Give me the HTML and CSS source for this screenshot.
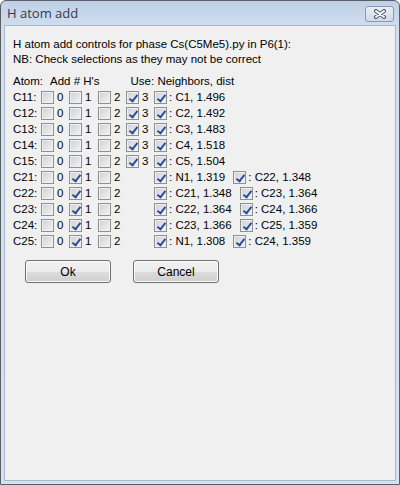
FILE: index.html
```html
<!DOCTYPE html>
<html lang="en">
<head>
    <meta charset="UTF-8">
    <title>H atom add</title>
    <link rel="stylesheet" href="styles.css">
</head>
<body>

<div class="window">
    <div class="titlebar">
        <span class="title">H atom add</span>
        <span class="close">
            <svg width="14" height="10" viewBox="0 0 14 10">
                <path d="M3 2 L11 8 M11 2 L3 8" stroke="#4a5566" stroke-width="4" stroke-linecap="round"/>
                <path d="M3 2 L11 8 M11 2 L3 8" stroke="#ffffff" stroke-width="2" stroke-linecap="round"/>
            </svg>
        </span>
    </div>

    <div class="content">
        <p class="note">H atom add controls for phase Cs(C5Me5).py in P6(1):</p>
        <p class="note">NB: Check selections as they may not be correct</p>

        <div class="table">
            <div class="row head">
                <span>Atom:</span>
                <span class="addh">Add # H's</span>
                <span class="use">Use: Neighbors, dist</span>
            </div>

            <!-- C5 ring atoms -->
            <div class="row">
                <span>C11:</span>
                <label><i class="cb"></i>0</label>
                <label><i class="cb"></i>1</label>
                <label><i class="cb"></i>2</label>
                <label><i class="cb on"></i>3</label>
                <div class="nbrs"><label><i class="cb on"></i>: C1, 1.496</label></div>
            </div>
            <div class="row">
                <span>C12:</span>
                <label><i class="cb"></i>0</label>
                <label><i class="cb"></i>1</label>
                <label><i class="cb"></i>2</label>
                <label><i class="cb on"></i>3</label>
                <div class="nbrs"><label><i class="cb on"></i>: C2, 1.492</label></div>
            </div>
            <div class="row">
                <span>C13:</span>
                <label><i class="cb"></i>0</label>
                <label><i class="cb"></i>1</label>
                <label><i class="cb"></i>2</label>
                <label><i class="cb on"></i>3</label>
                <div class="nbrs"><label><i class="cb on"></i>: C3, 1.483</label></div>
            </div>
            <div class="row">
                <span>C14:</span>
                <label><i class="cb"></i>0</label>
                <label><i class="cb"></i>1</label>
                <label><i class="cb"></i>2</label>
                <label><i class="cb on"></i>3</label>
                <div class="nbrs"><label><i class="cb on"></i>: C4, 1.518</label></div>
            </div>
            <div class="row">
                <span>C15:</span>
                <label><i class="cb"></i>0</label>
                <label><i class="cb"></i>1</label>
                <label><i class="cb"></i>2</label>
                <label><i class="cb on"></i>3</label>
                <div class="nbrs"><label><i class="cb on"></i>: C5, 1.504</label></div>
            </div>

            <!-- Cp ring atoms -->
            <div class="row">
                <span>C21:</span>
                <label><i class="cb"></i>0</label>
                <label><i class="cb on"></i>1</label>
                <label><i class="cb"></i>2</label>
                <span></span>
                <div class="nbrs">
                    <label><i class="cb on"></i>: N1, 1.319</label>
                    <label><i class="cb on"></i>: C22, 1.348</label>
                </div>
            </div>
            <div class="row">
                <span>C22:</span>
                <label><i class="cb"></i>0</label>
                <label><i class="cb on"></i>1</label>
                <label><i class="cb"></i>2</label>
                <span></span>
                <div class="nbrs">
                    <label><i class="cb on"></i>: C21, 1.348</label>
                    <label><i class="cb on"></i>: C23, 1.364</label>
                </div>
            </div>
            <div class="row">
                <span>C23:</span>
                <label><i class="cb"></i>0</label>
                <label><i class="cb on"></i>1</label>
                <label><i class="cb"></i>2</label>
                <span></span>
                <div class="nbrs">
                    <label><i class="cb on"></i>: C22, 1.364</label>
                    <label><i class="cb on"></i>: C24, 1.366</label>
                </div>
            </div>
            <div class="row">
                <span>C24:</span>
                <label><i class="cb"></i>0</label>
                <label><i class="cb on"></i>1</label>
                <label><i class="cb"></i>2</label>
                <span></span>
                <div class="nbrs">
                    <label><i class="cb on"></i>: C23, 1.366</label>
                    <label><i class="cb on"></i>: C25, 1.359</label>
                </div>
            </div>
            <div class="row">
                <span>C25:</span>
                <label><i class="cb"></i>0</label>
                <label><i class="cb on"></i>1</label>
                <label><i class="cb"></i>2</label>
                <span></span>
                <div class="nbrs">
                    <label><i class="cb on"></i>: N1, 1.308</label>
                    <label><i class="cb on"></i>: C24, 1.359</label>
                </div>
            </div>
        </div>

        <div class="actions">
            <button>Ok</button>
            <button>Cancel</button>
        </div>
    </div>
</div>

</body>
</html>
```

FILE: styles.css
```css
body {
    margin: 0;
    font-family: "Liberation Sans", Arial, sans-serif;
    font-size: 11.5px;
    color: #000;
    background: #fff;
}
.window {
    width: 400px;
    height: 485px;
    box-sizing: border-box;
    border: 1px solid #5a5f66;
    border-radius: 6px 6px 0 0;
    background: linear-gradient(#bfd0e6, #d3e0ef 30px, #d6e2f0);
    display: flex;
    flex-direction: column;
}
.titlebar {
    height: 24px;
    display: flex;
    align-items: center;
    justify-content: space-between;
    padding: 0 5px 0 6px;
}
.title {
    font-family: "Open Sans", "Liberation Sans", sans-serif;
    font-size: 13px;
    color: #333a4e;
}
.close {
    width: 29px;
    height: 16px;
    box-sizing: border-box;
    border: 1px solid #8b99ad;
    border-radius: 3px;
    background: linear-gradient(#e9eff6, #cfd9e6);
    display: flex;
    align-items: center;
    justify-content: center;
    margin-top: 2px;
}
.content {
    flex: 1;
    margin: 0 3px 3px;
    border: 1px solid #a9b8ca;
    background: #f0f0f0;
    padding: 11px 8px 0;
}
.note {
    margin: 0;
    line-height: 15px;
}
.table {
    margin-top: 6px;
}
.row {
    display: grid;
    grid-template-columns: 28px 28px 29px 28px 28px 1fr;
    height: 16px;
    align-items: center;
}
.row.head {
    display: flex;
}
.row.head .addh {
    margin-left: 7px;
}
.row.head .use {
    margin-left: 31px;
}
label {
    display: flex;
    align-items: center;
    white-space: nowrap;
}
.nbrs {
    display: flex;
    gap: 8px;
}
.cb {
    position: relative;
    width: 13px;
    height: 13px;
    box-sizing: border-box;
    border: 1px solid #8e8f8f;
    background: linear-gradient(135deg, #cdd0d4, #f3f3f3);
    box-shadow: inset 0 0 0 1px #eef0f2;
    margin-right: 3px;
}
.nbrs .cb {
    margin-right: 2px;
}
.cb.on::after {
    content: "";
    position: absolute;
    left: 4px;
    top: 1px;
    width: 3px;
    height: 7px;
    border: solid #2d4c9c;
    border-width: 0 2px 2px 0;
    transform: rotate(38deg);
}
.actions {
    display: flex;
    gap: 22px;
    margin: 11px 0 0 12px;
}
button {
    width: 86px;
    height: 23px;
    font-family: "Liberation Sans", Arial, sans-serif;
    font-size: 12px;
    color: #000;
    border: 1px solid #707070;
    border-radius: 3px;
    background: linear-gradient(#f2f2f2 0, #ebebeb 50%, #dddddd 50%, #cfcfcf 100%);
    box-shadow: inset 0 0 0 1px #fbfbfb;
}
```
